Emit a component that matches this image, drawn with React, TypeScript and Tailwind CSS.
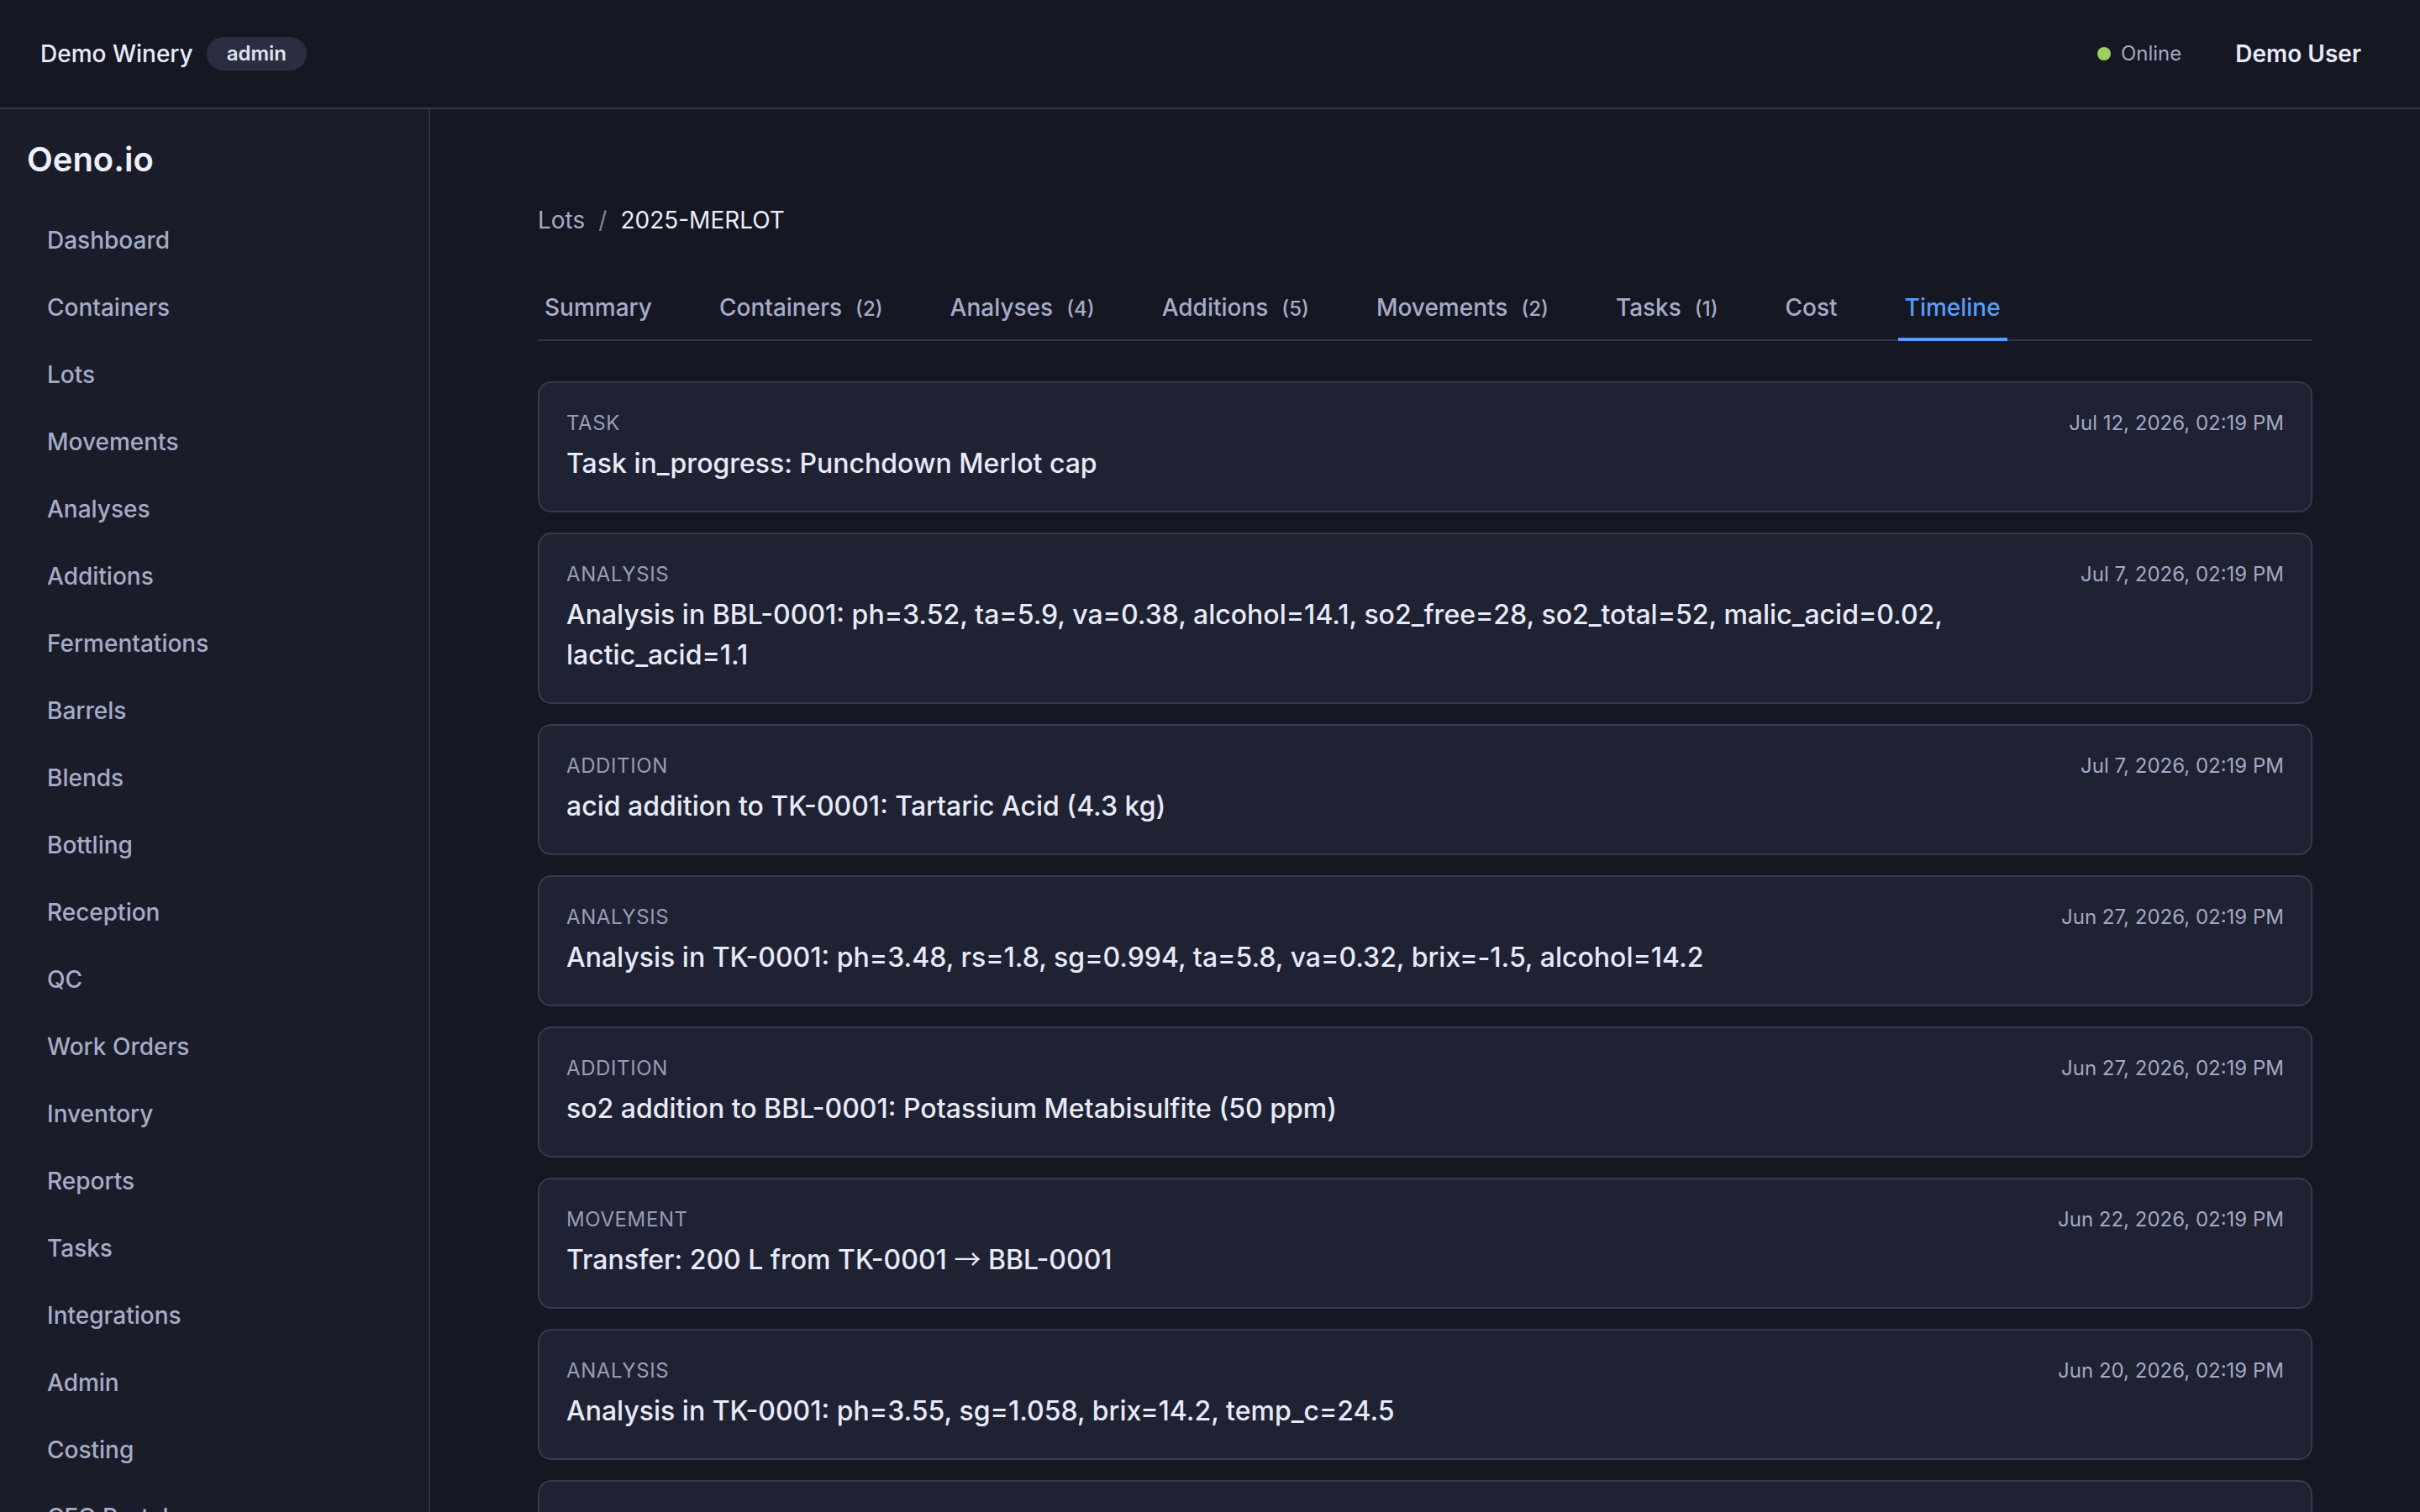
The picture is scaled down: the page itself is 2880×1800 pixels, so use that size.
import React from 'react';

type Entry = {
  kind: string;
  text: React.ReactNode;
  at: string;
};

const navItems = [
  'Dashboard',
  'Containers',
  'Lots',
  'Movements',
  'Analyses',
  'Additions',
  'Fermentations',
  'Barrels',
  'Blends',
  'Bottling',
  'Reception',
  'QC',
  'Work Orders',
  'Inventory',
  'Reports',
  'Tasks',
  'Integrations',
  'Admin',
  'Costing',
  'CFO Portal',
];

const tabs: { label: string; count?: number }[] = [
  { label: 'Summary' },
  { label: 'Containers', count: 2 },
  { label: 'Analyses', count: 4 },
  { label: 'Additions', count: 5 },
  { label: 'Movements', count: 2 },
  { label: 'Tasks', count: 1 },
  { label: 'Cost' },
  { label: 'Timeline' },
];

// Inter's arrow is short and heavy; the app shows the long thin one.
// leading-none keeps the taller CJK metrics from stretching the line.
const Arrow = () => <span className="font-['Noto_Sans_CJK_SC',sans-serif] font-normal leading-none">→</span>;

const timeline: Entry[] = [
  { kind: 'Task', text: 'Task in_progress: Punchdown Merlot cap', at: 'Jul 12, 2026, 02:19 PM' },
  {
    kind: 'Analysis',
    text: 'Analysis in BBL-0001: ph=3.52, ta=5.9, va=0.38, alcohol=14.1, so2_free=28, so2_total=52, malic_acid=0.02, lactic_acid=1.1',
    at: 'Jul 7, 2026, 02:19 PM',
  },
  { kind: 'Addition', text: 'acid addition to TK-0001: Tartaric Acid (4.3 kg)', at: 'Jul 7, 2026, 02:19 PM' },
  {
    kind: 'Analysis',
    text: 'Analysis in TK-0001: ph=3.48, rs=1.8, sg=0.994, ta=5.8, va=0.32, brix=-1.5, alcohol=14.2',
    at: 'Jun 27, 2026, 02:19 PM',
  },
  { kind: 'Addition', text: 'so2 addition to BBL-0001: Potassium Metabisulfite (50 ppm)', at: 'Jun 27, 2026, 02:19 PM' },
  {
    kind: 'Movement',
    text: (
      <>
        Transfer: 200 L from TK-0001 <Arrow /> BBL-0001
      </>
    ),
    at: 'Jun 22, 2026, 02:19 PM',
  },
  { kind: 'Analysis', text: 'Analysis in TK-0001: ph=3.55, sg=1.058, brix=14.2, temp_c=24.5', at: 'Jun 20, 2026, 02:19 PM' },
  { kind: 'Addition', text: 'nutrient addition to TK-0001: DAP (120 g/hL)', at: 'Jun 18, 2026, 02:19 PM' },
];

const App: React.FC = () => {
  return (
    <div className="[zoom:2] w-[1440px] h-[900px] overflow-hidden flex flex-col bg-[#151723] text-[#e5e7f5] font-['Inter','Noto_Sans',sans-serif] antialiased">
      {/* Top bar */}
      <header className="h-[65px] shrink-0 flex items-center justify-between pl-6 pr-[23px] border-b border-[#353849]">
        <div className="flex items-center gap-2">
          <span className="text-sm font-medium text-[#e8eaf7]">Demo Winery</span>
          <span className="px-3 py-0.5 rounded-full bg-[#2b2e41] text-xs font-semibold text-[#dfe2f2]">admin</span>
        </div>
        <div className="flex items-center gap-5">
          <div className="flex items-center gap-1.5">
            <span className="w-2 h-2 rounded-full bg-[#9ccf5f]"></span>
            <span className="text-xs text-[#a3a9c4]">Online</span>
          </div>
          <button className="px-3 py-1.5 text-sm font-semibold text-[#e8eaf7]">Demo User</button>
        </div>
      </header>

      <div className="flex flex-1 min-h-0">
        {/* Sidebar */}
        <aside className="w-64 shrink-0 bg-[#1a1c29] border-r border-[#30334a] p-4 overflow-hidden">
          <div className="text-xl font-semibold text-[#eef0fb] leading-7">Oeno.io</div>
          <nav className="mt-[14px] flex flex-col">
            {navItems.map(item => (
              <a key={item} className="px-3 py-2.5 text-sm font-medium text-[#a6acc7] rounded-md">
                {item}
              </a>
            ))}
          </nav>
        </aside>

        {/* Main */}
        <main className="flex-1 min-w-0 overflow-hidden px-16 pt-14">
          <div className="flex items-center gap-2 text-sm">
            <span className="text-[#a6acc7]">Lots</span>
            <span className="text-[#7f86a0]">/</span>
            <span className="text-[#eceefa]">2025-MERLOT</span>
          </div>

          <div className="mt-6 flex gap-8 border-b border-[#33364a]">
            {tabs.map(tab => {
              const active = tab.label === 'Timeline';
              return (
                <button
                  key={tab.label}
                  className={
                    active
                      ? 'px-1 py-2 -mb-px border-b-2 border-[#5b9cf7] text-sm font-medium text-[#5b9cf7]'
                      : 'px-1 py-2 -mb-px border-b-2 border-transparent text-sm font-medium text-[#a6acc7]'
                  }
                >
                  {tab.label}
                  {tab.count !== undefined && <span className="ml-2 text-xs">({tab.count})</span>}
                </button>
              );
            })}
          </div>

          <div className="mt-6 flex flex-col gap-3">
            {timeline.map((e, i) => (
              <div key={i} className="flex justify-between gap-4 p-4 rounded-lg border border-[#363a4e] bg-[#1f2233]">
                <div className="min-w-0">
                  <div className="text-xs uppercase tracking-wide text-[#979db8]">{e.kind}</div>
                  <div className="mt-1 text-base font-medium text-[#e8eaf7]">{e.text}</div>
                </div>
                <div className="shrink-0 text-xs text-[#a3a9c4]">{e.at}</div>
              </div>
            ))}
          </div>
        </main>
      </div>
    </div>
  );
};

export default App;
